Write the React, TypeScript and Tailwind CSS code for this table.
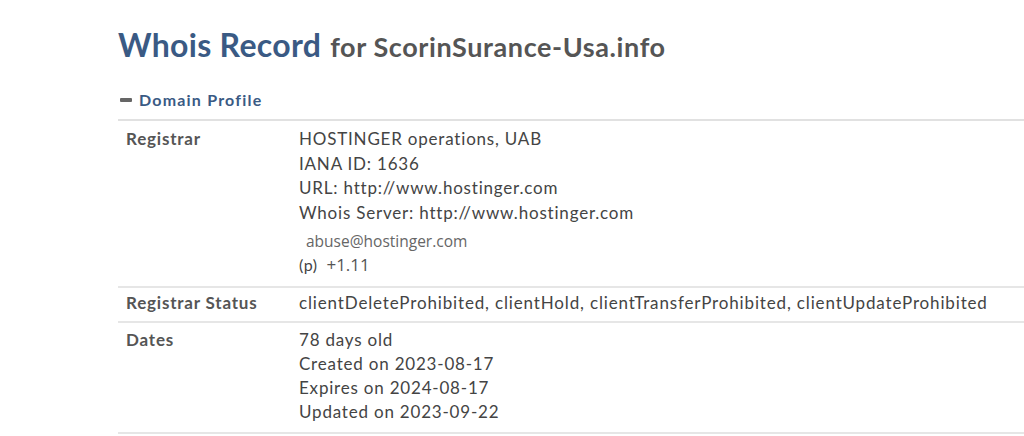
import React from "react";

const lato = { fontFamily: "Lato, 'Open Sans', sans-serif" };
const sans = { fontFamily: "'Open Sans', 'Liberation Sans', sans-serif" };

export default function App() {
  return (
    <div className="w-[1024px] h-[436px] bg-white overflow-hidden" style={lato}>
      <div className="pl-[118px] pt-[22px]">
        <h1 className="flex items-baseline gap-[9px] leading-[46px]">
          <span className="text-[32px] font-bold text-[#3a5a84] tracking-[0.3px]">Whois Record</span>
          <span className="text-[27px] font-bold text-[#555555] tracking-[0.6px]">for ScorinSurance-Usa.info</span>
        </h1>
        <div className="mt-[19px] flex items-center gap-[7px] h-[22px]">
          <span className="ml-[2px] w-[12px] h-[4px] bg-[#666666] rounded-[1px]" />
          <span className="text-[16px] font-bold text-[#3a5a84] tracking-[1.2px]">Domain Profile</span>
        </div>
        <div className="mt-[8px] border-t-2 border-[#e1e1e1]">
          <Row label="Registrar" pad="pt-[6px] pb-[7px]">
            <div className="leading-[24.5px]">HOSTINGER operations, UAB</div>
            <div className="leading-[24.5px]">IANA ID: 1636</div>
            <div className="leading-[24.5px]">URL: http://www.hostinger.com</div>
            <div className="leading-[24.5px]">Whois Server: http://www.hostinger.com</div>
            <div className="mt-[6px] pl-[7px] text-[15.5px] leading-[20px] text-[#666666] tracking-normal" style={sans}>abuse@hostinger.com</div>
            <div className="flex items-baseline gap-[9px] leading-[28px]">
              <span className="text-[16px] tracking-[0.5px]">(p)</span>
              <span className="text-[17px] text-[#555555] tracking-normal" style={sans}>+1.11</span>
            </div>
          </Row>
          <Row label="Registrar Status" pad="pt-[3px] pb-[6px]">
            <div className="leading-[24px] tracking-[0.85px]">clientDeleteProhibited, clientHold, clientTransferProhibited, clientUpdateProhibited</div>
          </Row>
          <Row label="Dates" pad="pt-[5px] pb-[8px]">
            <div className="leading-[24px]">78 days old</div>
            <div className="leading-[24px]">Created on 2023-08-17</div>
            <div className="leading-[24px]">Expires on 2024-08-17</div>
            <div className="leading-[24px]">Updated on 2023-09-22</div>
          </Row>
        </div>
      </div>
    </div>
  );
}

function Row({ label, pad, children }: { label: string; pad: string; children: React.ReactNode }) {
  return (
    <div className={`flex border-b-2 border-[#e6e6e6] ${pad}`}>
      <div className="w-[181px] pl-[8px] text-[17px] font-bold text-[#555555] leading-[24px] tracking-[0.8px] shrink-0">{label}</div>
      <div className="text-[17px] text-[#444444] tracking-[0.8px]">{children}</div>
    </div>
  );
}
